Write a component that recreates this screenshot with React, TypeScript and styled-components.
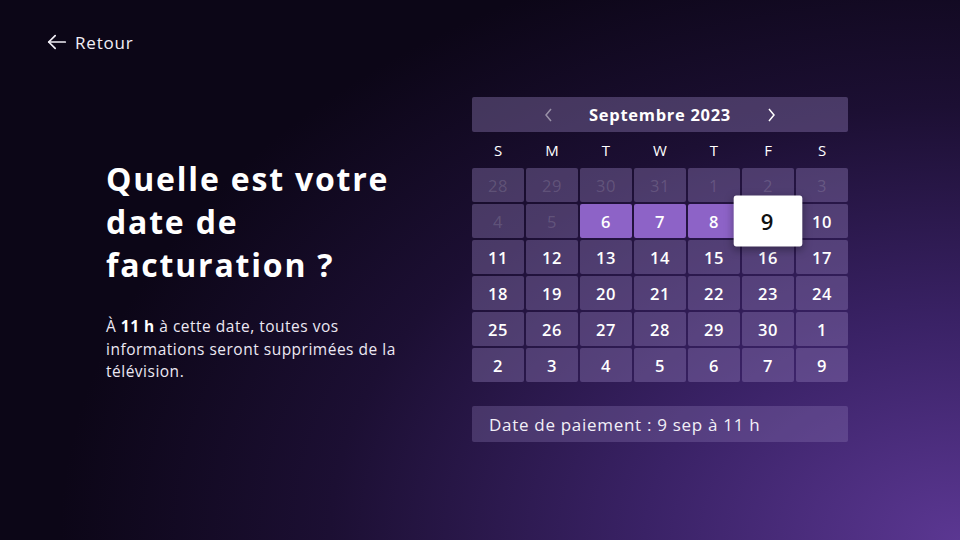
import React from 'react';
import styled, { createGlobalStyle } from 'styled-components';

const GlobalStyle = createGlobalStyle`
  html, body {
    margin: 0;
    padding: 0;
  }
  body {
    font-family: "Open Sans", "Liberation Sans", sans-serif;
    color: #fff;
  }
`;

const Screen = styled.div`
  width: 960px;
  height: 540px;
  overflow: hidden;
  box-sizing: border-box;
  padding: 30px 0 0 46px;
  background:
    radial-gradient(ellipse 900px 620px at 100% 100%, #5b3792 0%, #3a2266 35%, #1c0f33 70%, rgba(12, 6, 23, 0) 100%),
    #0c0617;
`;

const BackLink = styled.div`
  display: flex;
  align-items: center;
  gap: 7px;
  height: 24px;
  font-size: 17px;
  letter-spacing: 0.8px;
  color: #f2eff7;
`;

const Main = styled.div`
  display: grid;
  grid-template-columns: 366px 376px;
  padding-left: 60px;
  margin-top: 43px;
`;

const Intro = styled.div`
  padding-top: 60px;
`;

const Title = styled.h1`
  margin: 0;
  font-size: 32px;
  line-height: 43px;
  font-weight: 700;
  letter-spacing: 1.8px;
`;

const Description = styled.p`
  margin: 29px 0 0;
  font-size: 15.5px;
  line-height: 22.5px;
  letter-spacing: 0.5px;
  color: #ece8f3;
  width: 312px;

  strong {
    font-weight: 700;
    color: #fff;
  }
`;

const Calendar = styled.div`
  display: flex;
  flex-direction: column;
`;

const MonthBar = styled.div`
  height: 35px;
  display: flex;
  align-items: center;
  justify-content: center;
  gap: 30px;
  border-radius: 2px;
  background: rgba(150, 130, 190, 0.38);
`;

const MonthTitle = styled.div`
  font-size: 16.5px;
  font-weight: 700;
  letter-spacing: 0.7px;
  width: 150px;
  text-align: center;
`;

const Chevron = styled.span<{ $dim?: boolean }>`
  display: flex;
  color: ${p => (p.$dim ? 'rgba(255,255,255,0.45)' : '#fff')};
`;

const WeekDays = styled.div`
  display: grid;
  grid-template-columns: repeat(7, 1fr);
  gap: 2px;
  height: 36px;
  align-items: center;
  text-align: center;
  font-size: 15px;
`;

const DayGrid = styled.div`
  display: grid;
  grid-template-columns: repeat(7, 52px);
  grid-auto-rows: 34px;
  gap: 2px;
`;

type CellKind = 'muted' | 'normal' | 'range' | 'selected';

const Cell = styled.div<{ $kind: CellKind }>`
  position: relative;
  display: flex;
  align-items: center;
  justify-content: center;
  font-size: 16.5px;
  letter-spacing: 0.5px;
  font-weight: ${p => (p.$kind === 'muted' ? 400 : 600)};
  border-radius: 2px;
  color: ${p =>
    p.$kind === 'muted' ? 'rgba(255,255,255,0.14)' : p.$kind === 'selected' ? '#111' : '#fff'};
  background: ${p =>
    p.$kind === 'range' ? '#8d63c7' : p.$kind === 'selected' ? '#fff' : 'rgba(150, 130, 190, 0.38)'};
  ${p =>
    p.$kind === 'selected' &&
    `
    z-index: 2;
    transform: scale(1.32, 1.5);
    box-shadow: 0 2px 6px rgba(0,0,0,0.35);
  `}
`;

const SelectedLabel = styled.span`
  display: inline-block;
  transform: scale(0.76, 0.667);
  font-size: 22px;
  font-weight: 600;
`;

const Footer = styled.div`
  margin-top: 24px;
  height: 36px;
  display: flex;
  align-items: center;
  padding-left: 17px;
  border-radius: 2px;
  background: rgba(150, 130, 190, 0.3);
  font-size: 17px;
  letter-spacing: 0.7px;
  color: #f2eff7;
`;

const weekDays = ['S', 'M', 'T', 'W', 'T', 'F', 'S'];

const days: { n: number; kind: CellKind }[] = [
  ...[28, 29, 30, 31, 1, 2, 3, 4, 5].map(n => ({ n, kind: 'muted' as CellKind })),
  ...[6, 7, 8].map(n => ({ n, kind: 'range' as CellKind })),
  { n: 9, kind: 'selected' },
  ...Array.from({ length: 21 }, (_, i) => ({ n: i + 10, kind: 'normal' as CellKind })),
  ...[1, 2, 3, 4, 5, 6, 7, 9].map(n => ({ n, kind: 'normal' as CellKind })),
];

const App: React.FC = () => {
  return (
    <>
      <GlobalStyle />
      <Screen>
        <BackLink>
          <svg width="22" height="22" viewBox="0 0 24 24" fill="none" stroke="currentColor" strokeWidth="1.9" strokeLinecap="round" strokeLinejoin="round">
            <path d="M21 12H3" />
            <path d="M10 5l-7 7 7 7" />
          </svg>
          Retour
        </BackLink>
        <Main>
          <Intro>
            <Title>
              Quelle est votre
              <br />
              date de
              <br />
              facturation ?
            </Title>
            <Description>
              À <strong>11 h</strong> à cette date, toutes vos informations seront supprimées de la télévision.
            </Description>
          </Intro>
          <Calendar>
            <MonthBar>
              <Chevron $dim>
                <svg width="12" height="16" viewBox="0 0 12 16" fill="none" stroke="currentColor" strokeWidth="1.5">
                  <path d="M8 2L3 8l5 6" />
                </svg>
              </Chevron>
              <MonthTitle>Septembre 2023</MonthTitle>
              <Chevron>
                <svg width="12" height="16" viewBox="0 0 12 16" fill="none" stroke="currentColor" strokeWidth="1.5">
                  <path d="M4 2l5 6-5 6" />
                </svg>
              </Chevron>
            </MonthBar>
            <WeekDays>
              {weekDays.map((d, i) => (
                <span key={i}>{d}</span>
              ))}
            </WeekDays>
            <DayGrid>
              {days.map((d, i) => (
                <Cell key={i} $kind={d.kind}>
                  {d.kind === 'selected' ? <SelectedLabel>{d.n}</SelectedLabel> : d.n}
                </Cell>
              ))}
            </DayGrid>
            <Footer>Date de paiement : 9 sep à 11 h</Footer>
          </Calendar>
        </Main>
      </Screen>
    </>
  );
};

export default App;
